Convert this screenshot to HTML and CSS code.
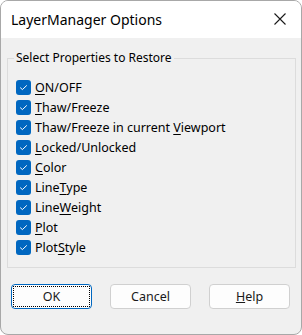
FILE: index.html
```html
<!doctype html>
<html lang="en">
<head>
    <meta charset="UTF-8">
    <title>LayerManager Options</title>
    <link rel="stylesheet" href="styles.css">
</head>
<body>
    <div class="window">
        <div class="titlebar">
            <span class="title">LayerManager Options</span>
            <svg class="close" width="12" height="12" viewBox="0 0 12 12">
                <path d="M0.5 0.5 L11.5 11.5 M11.5 0.5 L0.5 11.5" stroke="#1a1a1a" stroke-width="1.1" fill="none"/>
            </svg>
        </div>

        <div class="content">
            <fieldset class="group">
                <legend>Select Properties to Restore</legend>
                <div class="options">
                    <label class="option"><span class="check"></span><span><u>O</u>N/OFF</span></label>
                    <label class="option"><span class="check"></span><span><u>T</u>haw/Freeze</span></label>
                    <label class="option"><span class="check"></span><span>Thaw/Freeze in current <u>V</u>iewport</span></label>
                    <label class="option"><span class="check"></span><span><u>L</u>ocked/Unlocked</span></label>
                    <label class="option"><span class="check"></span><span><u>C</u>olor</span></label>
                    <label class="option"><span class="check"></span><span>Line<u>T</u>ype</span></label>
                    <label class="option"><span class="check"></span><span>Line<u>W</u>eight</span></label>
                    <label class="option"><span class="check"></span><span><u>P</u>lot</span></label>
                    <label class="option"><span class="check"></span><span>Plot<u>S</u>tyle</span></label>
                </div>
            </fieldset>

            <div class="buttons">
                <button class="btn default"><span class="focus">OK</span></button>
                <button class="btn">Cancel</button>
                <button class="btn"><u>H</u>elp</button>
            </div>
        </div>
    </div>
</body>
</html>
```

FILE: styles.css
```css
html, body {
    margin: 0;
    background-color: #ffffff;
}

body {
    font-family: "Noto Sans", "Open Sans", sans-serif;
    font-size: 12px;
    color: #000000;
}

.window {
    width: 302px;
    height: 335px;
    box-sizing: border-box;
    border: 1px solid #a8a8a8;
    border-radius: 8px;
    overflow: hidden;
    display: flex;
    flex-direction: column;
    background-color: #f0f0f0;
}

.titlebar {
    height: 37px;
    flex-shrink: 0;
    background-color: #ffffff;
    display: flex;
    align-items: center;
    justify-content: space-between;
    padding: 0 15px 0 10px;
}

.title {
    font-size: 14px;
    color: #000000;
    margin-top: -1px;
}

.close {
    margin-top: -1px;
}

.content {
    flex: 1;
    display: flex;
    flex-direction: column;
}

.group {
    margin: 12px 5px 0 6px;
    padding: 0 0 0 8px;
    border: 1px solid #dcdcdc;
    height: 218px;
    box-sizing: border-box;
    min-width: 0;
}

.group legend {
    margin-left: -2px;
    padding: 0 2px;
    font-size: 12px;
    line-height: 16px;
    color: #000000;
}

.options {
    display: flex;
    flex-direction: column;
    margin-top: 11px;
}

.option {
    display: flex;
    align-items: center;
    gap: 4px;
    height: 20px;
    white-space: nowrap;
    font-size: 12.5px;
}

.check {
    width: 15px;
    height: 15px;
    border-radius: 3px;
    background-color: #0067c0;
    flex-shrink: 0;
    background-image: url("data:image/svg+xml,%3Csvg xmlns='http://www.w3.org/2000/svg' width='15' height='15' viewBox='0 0 15 15'%3E%3Cpath d='M4.2 7.6 L6.4 9.6 L10.8 5.4' stroke='white' stroke-width='1' fill='none'/%3E%3C/svg%3E");
}

.option u {
    text-underline-offset: 2px;
}

.buttons {
    display: flex;
    gap: 18px;
    padding-left: 10px;
    margin-top: 16px;
}

.btn {
    width: 81px;
    height: 25px;
    box-sizing: border-box;
    background-color: #fdfdfd;
    border: 1px solid #d0d0d0;
    border-radius: 4px;
    font-family: "Noto Sans", "Open Sans", sans-serif;
    font-size: 12.5px;
    color: #1a1a1a;
    padding: 0;
}

.btn.default {
    border-color: #0067c0;
    padding: 1px;
}

.focus {
    display: flex;
    align-items: center;
    justify-content: center;
    height: 100%;
    box-sizing: border-box;
    border: 1px dotted #000000;
}
```
